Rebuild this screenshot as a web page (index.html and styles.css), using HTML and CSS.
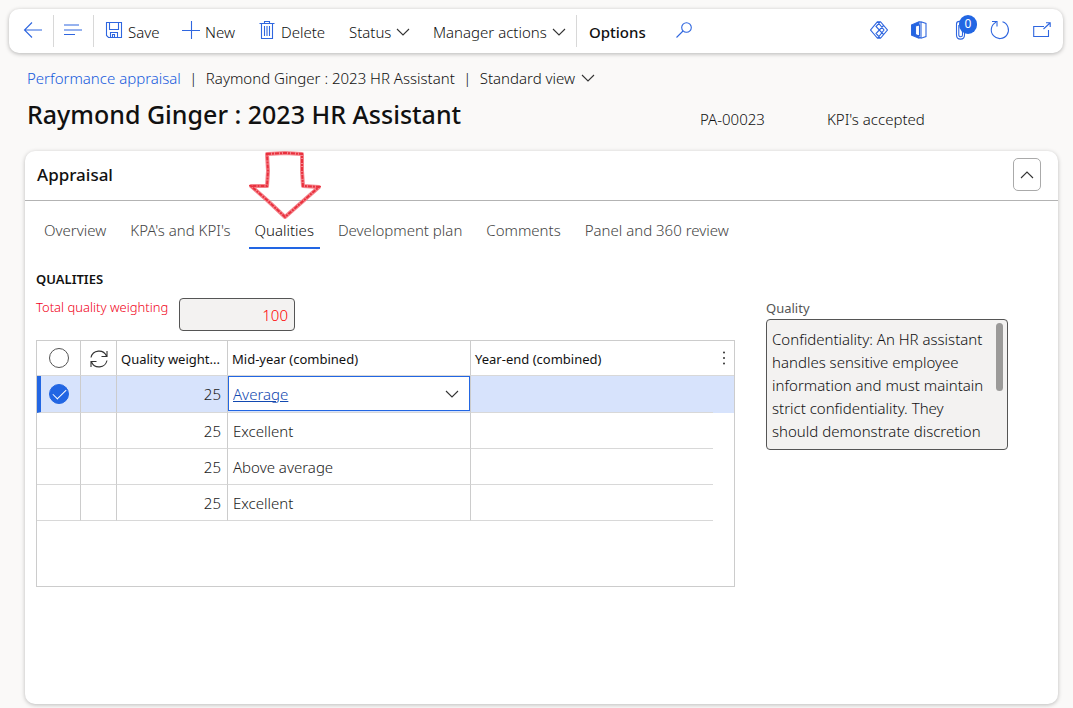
FILE: index.html
```html
<!DOCTYPE html>
<html lang="en">
<head>
<meta charset="utf-8">
<meta name="viewport" content="width=device-width, initial-scale=1">
<title>Performance appraisal</title>
<link rel="stylesheet" href="styles.css">
</head>
<body>
<header class="toolbar">
  <button class="tool tool-icon" type="button" aria-label="Back"><svg class="icon" width="20" height="20" viewBox="0 0 20 20"><path d="M19 10H1.500M9 2.500L1.500 10L9 17.500"/></svg></button>
  <span class="rule"></span>
  <button class="tool tool-icon" type="button" aria-label="Menu"><svg class="icon" width="20" height="20" viewBox="0 0 20 20"><path d="M0 5H15M0 10H18M0 14.500H11"/></svg></button>
  <span class="rule"></span>
  <button class="tool tool-save" type="button"><svg class="icon" width="18" height="18" viewBox="0 0 18 18"><path d="M1.500 1.500H16.500V16.500H3.500L1.500 14.500ZM4.500 1.500V8.500H13.500V1.500M5.500 16.500V11.500H12.500V16.500M7.500 16.500V13.500H9.500V16.500"/></svg><span class="tool-label">Save</span></button>
  <button class="tool tool-new" type="button"><svg class="icon" width="20" height="20" viewBox="0 0 20 20"><path d="M1 10.500H19M10.500 1V19"/></svg><span class="tool-label">New</span></button>
  <button class="tool tool-delete" type="button"><svg class="icon" width="16" height="20" viewBox="0 0 16 20"><path d="M.5 3.500H15.500M5.500 3.500V1.500H10.500V3.500M2.500 3.500V18.500H13.500V3.500M5.500 6V16M8 6V16M10.500 6V16"/></svg><span class="tool-label">Delete</span></button>
  <button class="tool tool-status" type="button"><span class="tool-label">Status</span><svg class="chevron" width="14" height="8" viewBox="0 0 14 8"><path d="M1 1L7 7L13 1"/></svg></button>
  <button class="tool tool-manager" type="button"><span class="tool-label">Manager actions</span><svg class="chevron" width="14" height="8" viewBox="0 0 14 8"><path d="M1 1L7 7L13 1"/></svg></button>
  <span class="rule"></span>
  <button class="tool tool-options" type="button"><span class="tool-label">Options</span></button>
  <button class="tool" type="button" aria-label="Search"><svg class="icon" width="16" height="16" viewBox="0 0 16 16"><circle cx="10.500" cy="5.500" r="4.800"/><path d="M7 9L.5 15.500"/></svg></button>
  <div class="toolbar-end">
    <button class="tool" type="button" aria-label="Power Apps"><svg class="icon" width="18" height="18" viewBox="0 0 18 18"><path d="M7.500 .7L.6 9L7.500 17.300H10.500L17.400 9L10.500 .7ZM7.500 .7L14 9L7.500 17.300M10.500 .7L6 5.500L13.500 13.500M10.500 17.300L6 12.500L13.500 4.500"/></svg></button>
    <button class="tool" type="button" aria-label="Open in Office"><svg class="icon" width="16" height="18" viewBox="0 0 16 18"><path class="icon-solid" d="M.5 4L8 .8V4L4.500 5V13.500L8 15V17.200L.5 14Z"/><path d="M8 1L10 .8L15 2.500V15.500L10 17.200L4.500 14.500H8.500V3.500M10 .8V17.200"/></svg></button>
    <button class="tool attach" type="button" aria-label="Attachments, 0"><svg class="icon" width="12" height="20" viewBox="0 0 12 20"><path d="M1.500 4V15C1.500 20.500 9.500 20.500 9.500 15V5M1.500 4C1.500 .5 7.500 .5 7.500 4V15C7.500 17.300 3.800 17.300 3.800 15V5"/></svg><span class="badge">0</span></button>
    <button class="tool" type="button" aria-label="Refresh"><svg class="icon" width="20" height="20" viewBox="0 0 20 20"><path d="M12.500 1.800A8.600 8.600 0 1 1 6 2.300M2 1.500H7V6.500"/></svg></button>
    <button class="tool" type="button" aria-label="Open in new window"><svg class="icon" width="18" height="16" viewBox="0 0 18 16"><path d="M11 4.500H.7V14.500H15.500V8M10.500 7L17 1M13 .8H17.200V5"/></svg></button>
  </div>
</header>

<main class="page">
  <nav class="crumbs" aria-label="Breadcrumb">
    <a href="#list">Performance appraisal</a><span class="bar">|</span><span>Raymond Ginger : 2023 HR Assistant</span><span class="bar">|</span>
    <button class="view" type="button">Standard view<svg class="chevron" width="14" height="8" viewBox="0 0 14 8"><path d="M1 1L7 7L13 1"/></svg></button>
  </nav>
  <div class="heading">
    <h1>Raymond Ginger : 2023 HR Assistant</h1>
    <span class="record-id">PA-00023</span>
    <span class="record-state">KPI's accepted</span>
  </div>

  <section class="card">
    <div class="card-head">
      <h2>Appraisal</h2>
      <button class="collapse" type="button" aria-label="Collapse"><svg class="chevron" width="14" height="8" viewBox="0 0 14 8"><path d="M1 7L7 1L13 7"/></svg></button>
    </div>
    <div class="tabs" role="tablist">
      <button class="tab" role="tab" type="button">Overview</button>
      <button class="tab" role="tab" type="button">KPA's and KPI's</button>
      <button class="tab tab-active" role="tab" type="button" aria-selected="true">Qualities
        <svg class="pointer" width="72" height="68" viewBox="0 0 72 68"><path class="pointer-base" d="M18 3L36 2L53 3L53 20L54 35L70 36L53 51L36 66L19 50L2 35L18 35L19 20Z"/><path class="pointer-grain" d="M18 3L36 2L53 3L53 20L54 35L70 36L53 51L36 66L19 50L2 35L18 35L19 20Z"/></svg>
      </button>
      <button class="tab" role="tab" type="button">Development plan</button>
      <button class="tab" role="tab" type="button">Comments</button>
      <button class="tab" role="tab" type="button">Panel and 360 review</button>
    </div>

    <div class="content">
      <div class="left">
        <h3>QUALITIES</h3>
        <div class="total">
          <label for="total">Total quality weighting</label>
          <input id="total" class="total-box" value="100" readonly>
        </div>
        <div class="grid">
          <table>
            <colgroup><col class="c-mark"><col class="c-sync"><col class="c-weight"><col class="c-mid"><col class="c-end"><col class="c-more"></colgroup>
            <thead>
              <tr>
                <th><input class="mark" type="checkbox" aria-label="Select all rows"></th>
                <th><button class="plain" type="button" aria-label="Refresh rows"><svg class="icon dark" width="20" height="20" viewBox="0 0 20 20"><path d="M2 8.500A8.200 8.200 0 0 1 17.500 7M18 2V7.500H12.500M18 11.500A8.200 8.200 0 0 1 2.500 13M2 18V12.500H7.500"/></svg></button></th>
                <th>Quality weight...</th>
                <th>Mid-year (combined)</th>
                <th>Year-end (combined)</th>
                <th class="more-cell"><button class="plain" type="button" aria-label="More options"><svg class="dots" width="4" height="14" viewBox="0 0 4 14"><circle cx="2" cy="1.500" r="1"/><circle cx="2" cy="7" r="1"/><circle cx="2" cy="12.500" r="1"/></svg></button></th>
              </tr>
            </thead>
            <tbody>
              <tr class="picked">
                <td class="first"><input class="mark" type="checkbox" aria-label="Row 1" checked></td><td></td><td class="num">25</td>
                <td class="editing"><div class="combo"><select aria-label="Mid-year (combined)"><option>Average</option><option>Above average</option><option>Excellent</option></select><svg class="chevron" width="14" height="8" viewBox="0 0 14 8"><path d="M1 1L7 7L13 1"/></svg></div></td>
                <td></td><td></td>
              </tr>
              <tr><td></td><td></td><td class="num">25</td><td>Excellent</td><td></td><td></td></tr>
              <tr><td></td><td></td><td class="num">25</td><td>Above average</td><td></td><td></td></tr>
              <tr><td></td><td></td><td class="num">25</td><td>Excellent</td><td></td><td></td></tr>
            </tbody>
          </table>
        </div>
      </div>
      <div class="right">
        <label for="quality">Quality</label>
        <div class="quality">
          <textarea id="quality" readonly>Confidentiality: An HR assistant handles sensitive employee information and must maintain strict confidentiality. They should demonstrate discretion</textarea>
          <span class="thumb"></span>
        </div>
      </div>
    </div>
  </section>
</main>
</body>
</html>
```
FILE: styles.css
```css
* { box-sizing: border-box; }
body {
  margin: 0;
  min-height: 100vh;
  display: flex;
  flex-direction: column;
  background: #faf9f8;
  color: #111;
  font: 300 15px/20px "Noto Sans", "Open Sans", sans-serif;
}
button, input, select, textarea { font: inherit; color: inherit; }
button { border: 0; padding: 0; background: none; }
h1, h2, h3 { margin: 0; }
svg { display: block; flex: none; fill: none; }
.icon { stroke: #2f66df; stroke-width: 1.1; }
.dark, .chevron { stroke: #333; stroke-width: 1.1; }
.icon-solid { fill: #2266e3; }

.toolbar {
  display: flex;
  align-items: stretch;
  height: 44px;
  margin: 9px 10px 0 9px;
  background: #fff;
  border-radius: 10px;
  box-shadow: 0 1px 4px rgba(0, 0, 0, .28);
}
.tool { display: flex; align-items: center; padding-bottom: 2px; gap: 5px; white-space: nowrap; }
.tool-label { padding-top: 4px; }
.rule { width: 1px; margin: 6px 0; background: #d8d8d8; }
.tool-icon { width: 39px; justify-content: center; }
.toolbar > .tool-icon:first-child { width: 44px; padding-left: 4px; }
.tool-save { width: 87px; padding-left: 11px; }
.tool-new { width: 78px; gap: 4px; }
.tool-delete { width: 90px; gap: 6px; }
.tool-status { width: 84px; }
.tool-manager { width: 143px; }
.tool .chevron { margin-top: 3px; }
.tool-options { width: 99px; padding-left: 12px; font-weight: 500; }
.toolbar-end { display: flex; gap: 23px; margin-left: auto; padding-right: 12px; }
.attach { position: relative; width: 12px; margin-left: 5px; }
.badge {
  position: absolute;
  left: 4px;
  top: 6px;
  width: 18px;
  height: 19px;
  border-radius: 10px;
  background: #2266e3;
  color: #fff;
  font-size: 12px;
  font-weight: 400;
  line-height: 18px;
  text-align: center;
}

.page { flex: 1; display: flex; flex-direction: column; padding: 15px 15px 4px 25px; }
.crumbs { display: flex; padding-left: 2px; }
.crumbs a { color: #1659dc; text-decoration: none; }
.bar { width: 25px; text-align: center; }
.view { display: flex; align-items: center; gap: 6px; }
.heading { display: flex; align-items: center; height: 40px; margin-top: 6px; padding-left: 2px; }
h1 { width: 673px; font-size: 25px; line-height: 32px; font-weight: 500; }
.record-id { width: 127px; padding-top: 10px; }
.record-state { padding-top: 10px; }

.card {
  flex: 1;
  margin-top: 17px;
  background: #fff;
  border-radius: 10px;
  box-shadow: 0 1px 4px rgba(0, 0, 0, .25);
}
.card-head {
  display: flex;
  align-items: center;
  justify-content: space-between;
  height: 50px;
  padding: 0 17px 2px 12px;
  border-bottom: 1px solid #b3b3b3;
}
h2 { font-size: 17px; line-height: 24px; font-weight: 500; }
.collapse {
  display: grid;
  place-items: center;
  width: 28px;
  height: 33px;
  border: 1px solid #aaa;
  border-radius: 5px;
}
.tabs { display: flex; gap: 12px; padding: 12px 13px 0; }
.tab { height: 36px; padding: 0 6px; border-bottom: 2px solid transparent; color: #444; white-space: nowrap; }
.tab-active { position: relative; border-color: #2266e3; color: #111; }
.pointer { position: absolute; left: 0; bottom: 28px; }
.pointer-base { stroke: #f4848c; stroke-width: 4; stroke-linejoin: round; }
.pointer-grain { stroke: #e9303d; stroke-width: 2; stroke-dasharray: 4 1 2 1; }

.content { display: flex; gap: 31px; padding: 20px 50px 0 11px; }
.left { flex: 1; }
h3 { font-size: 13px; line-height: 20px; font-weight: 600; }
.total { display: flex; gap: 11px; margin-top: 9px; color: #f00018; font-size: 13px; }
.total label { width: 132px; line-height: 18px; white-space: nowrap; }
.total-box {
  width: 116px;
  height: 33px;
  padding: 1px 6px 0;
  border: 1px solid #555;
  border-radius: 4px;
  background: #f3f2f1;
  color: #f00;
  font-size: 15px;
  text-align: right;
}
.grid { height: 247px; margin-top: 9px; border: 1px solid #ccc; }
table { width: 100%; border-collapse: separate; border-spacing: 0; table-layout: fixed; }
.c-mark { width: 44px; }
.c-sync { width: 36px; }
.c-weight { width: 111px; }
.c-mid { width: 243px; }
.c-more { width: 21px; }
th, td { height: 36px; padding: 0 4px; border-right: 1px solid #ccc; border-bottom: 1px solid #d8d8d8; text-align: left; }
th { height: 35px; padding-top: 2px; font-size: 13px; font-weight: 400; color: #111; white-space: nowrap; }
td { padding: 1px 5px 0; color: #222; }
th:nth-child(n+5), td:nth-child(n+5) { border-right: 0; }
tbody tr td:last-child { border-bottom: 0; }
.num { padding-right: 6px; text-align: right; }
.picked td { height: 37px; padding-bottom: 1px; background: #d7e3fc; }
.picked .first { border-left: 4px solid #2266e3; padding-left: 8px; }
.mark {
  display: block;
  appearance: none;
  width: 20px;
  height: 20px;
  margin: 0 0 3px 8px;
  border: 1px solid #555;
  border-radius: 50%;
  background: #fff;
}
.mark:checked { display: grid; place-items: center; margin: 0; border-color: #2266e3; background: #2266e3; }
.mark:checked::after {
  content: "";
  width: 12px;
  height: 6px;
  margin-bottom: 3px;
  border: solid #fff;
  border-width: 0 0 1px 1px;
  rotate: -45deg;
}
.plain { display: block; margin: 0 auto; }
.more-cell { padding: 0; }
.dots { fill: #333; }
.picked .editing { padding: 0; vertical-align: top; }
.combo { position: relative; display: grid; height: 35px; border: 1px solid #2266e3; background: #fff; }
.combo select {
  appearance: none;
  border: 0;
  padding: 1px 4px 0;
  background: none;
  color: #1249b0;
  text-decoration: underline;
}
.combo .chevron { position: absolute; right: 10px; top: 13px; }

.right { width: 242px; padding-top: 29px; color: #555; font-size: 13px; font-weight: 400; }
.right label { display: block; line-height: 21px; }
.quality { position: relative; display: grid; color: #111; font-size: 15px; font-weight: 300; }
.quality textarea {
  height: 131px;
  padding: 8px 20px 6px 5px;
  border: 1px solid #555;
  border-radius: 4px;
  background: #f3f2f1;
  line-height: 23px;
  resize: none;
  overflow: hidden;
}
.thumb { position: absolute; right: 5px; top: 4px; width: 7px; height: 68px; border-radius: 4px; background: #9b9a99; }
```
